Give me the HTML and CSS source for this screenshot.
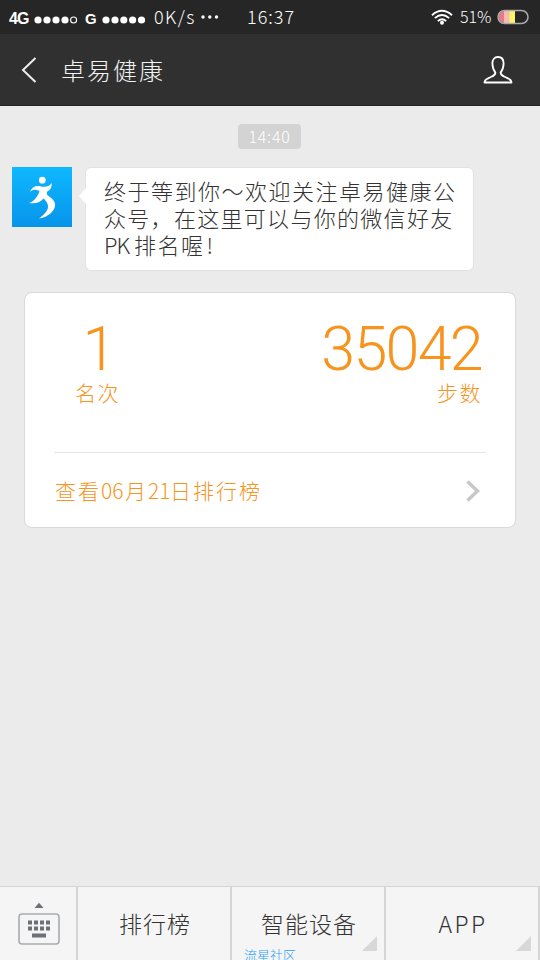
FILE: index.html
```html
<!DOCTYPE html>
<html lang="zh-CN">
<head>
<meta charset="utf-8">
<title>卓易健康</title>
<link rel="stylesheet" href="styles.css">
</head>
<body>
<div class="screen">
  <header class="status">
    <span class="net net-4g">4G</span>
    <svg class="dots" width="44" height="10" viewBox="0 0 44 10"><g fill="#fff"><circle cx="4" cy="5" r="3.6"/><circle cx="13" cy="5" r="3.6"/><circle cx="22" cy="5" r="3.6"/><circle cx="31" cy="5" r="3.6"/></g><circle cx="39.6" cy="5" r="3" fill="none" stroke="#fff" stroke-width="1.1"/></svg>
    <span class="net net-g">G</span>
    <svg class="dots" width="44" height="10" viewBox="0 0 44 10"><g fill="#fff"><circle cx="4" cy="5" r="3.6"/><circle cx="13" cy="5" r="3.6"/><circle cx="21.8" cy="5" r="3.6"/><circle cx="30.6" cy="5" r="3.6"/><circle cx="39.5" cy="5" r="3.6"/></g></svg>
    <span class="speed">0K/s</span>
    <svg class="more" width="18" height="4" viewBox="0 0 18 4"><g fill="#fff"><circle cx="2" cy="2" r="1.7"/><circle cx="8.800" cy="2" r="1.7"/><circle cx="15.500" cy="2" r="1.7"/></g></svg>
    <span class="clock">16:37</span>
    <svg class="wifi" width="22" height="17" viewBox="0 0 22 17"><g fill="none" stroke="#fff" stroke-width="1.8"><path d="M1 6.200Q11-2.600 21 6.200"/><path d="M3.800 9.200Q11 2.800 18.200 9.200"/><path d="M6.800 12.100Q11 8.300 15.200 12.100"/></g><circle cx="11" cy="13.800" r="2" fill="#fff"/></svg>
    <span class="percent">51%</span>
    <svg class="battery" width="32" height="16" viewBox="0 0 32 16"><path d="M8 2H7.500A6 6 0 0 0 7.500 14H8z" fill="#e77a85"/><path d="M7 2h6v12H7z" fill="#f5bdb0"/><path d="M12.500 2h5.500v12h-5.500z" fill="#fff36a"/><rect x="1" y="1.500" width="30" height="13" rx="6.500" fill="none" stroke="#aaa" stroke-width="1.500"/></svg>
  </header>
  <nav class="titlebar">
    <svg class="back" width="16" height="28" viewBox="0 0 16 28"><path d="M14.500 2L2 14l12.500 12" fill="none" stroke="#eee" stroke-width="2"/></svg>
    <h1 class="title">卓易健康</h1>
    <svg class="person" width="30" height="30" viewBox="0 0 30 30"><path d="M12.400 17.600C10.600 15.200 9.400 12.300 9.400 8.500C9.400 4.400 11.400 2 15 2s5.600 2.400 5.600 6.500c0 3.800-1.200 6.700-3 9.100c.1 3.200 2.300 3.200 6.800 5.500c2.800 1.400 4.100 1.700 4.100 4.400H1.500c0-2.700 1.300-3 4.100-4.400c4.500-2.300 6.700-2.300 6.800-5.500z" fill="none" stroke="#fff" stroke-width="1.800" stroke-linejoin="round"/></svg>
  </nav>
  <main class="chat">
    <time class="stamp">14:40</time>
    <div class="message">
      <svg class="avatar" width="60" height="60" viewBox="0 0 60 60"><defs><linearGradient id="sky" x1="0" y1="0" x2="0" y2="1"><stop offset="0" stop-color="#0eb8ff"/><stop offset="1" stop-color="#0794ea"/></linearGradient></defs><path d="M0 0h60v60H0z" fill="url(#sky)"/><g fill="#fff"><circle cx="30.300" cy="13.200" r="3.400"/><path d="M18 24.800C20 19.800 24 18 29 19.400C33 20.500 37.500 19.500 39.600 16C40 20.500 38.200 23 35 24.800C34.200 27 35 28 37.800 30C43 33.500 44.500 37.500 41.800 42.500C38.800 47.500 33 50.800 27 51.500C31.500 48 35.800 44 36 40C36.200 36 33.800 33.800 31.500 31.500C28.500 35.200 24 37.200 17.200 36C22 34.300 25.800 29.500 27.500 24.200C24.500 22.300 21 22 18 24.800z"/></g></svg>
      <div class="bubble">
        <p>终于等到你～欢迎关注卓易健康公</p>
        <p class="second">众号，在这里可以与你的微信好友</p>
        <p><span class="pk">PK</span>排名喔<span class="bang">!</span></p>
      </div>
    </div>
    <section class="card">
      <div class="stats">
        <div class="stat rank"><strong>1</strong><span>名次</span></div>
        <div class="stat steps"><strong>35042</strong><span>步数</span></div>
      </div>
      <div class="link">
        <span class="link-text">查看<i class="n06">06</i>月<i class="n21">21</i>日排行榜</span>
        <svg width="14" height="22" viewBox="0 0 14 22"><path d="M1.500 1.500L11.500 11l-10 9.500" fill="none" stroke="#c8c8c8" stroke-width="3.600"/></svg>
      </div>
    </section>
  </main>
  <footer class="menu">
    <div class="keys"><svg width="42" height="43" viewBox="0 0 42 43"><path d="M21 .8l4.500 5.200h-9z" fill="#6d7076"/><rect x="1" y="12" width="40" height="30" rx="3" fill="none" stroke="#a9abb0" stroke-width="1.600"/><g fill="#6d7076"><path d="M10 18.500h4v4h-4zm6 0h4v4h-4zm6 0h4v4h-4zm6 0h4v4h-4zM10 24.500h4v4h-4zm6 0h4v4h-4zm6 0h4v4h-4zm6 0h4v4h-4zM14 31.500h14v4H14z"/></g></svg></div>
    <div class="item"><span>排行榜</span></div>
    <div class="item"><span>智能设备</span><b class="corner"></b><small class="watermark">流星社区</small></div>
    <div class="item"><span class="app">APP</span><b class="corner"></b></div>
  </footer>
</div>
</body>
</html>
```
FILE: styles.css
```css
* { box-sizing: border-box; }
body { margin: 0; font-family: "Noto Sans CJK SC", sans-serif; font-weight: 300; }
h1, p { margin: 0; font-weight: 300; }
svg { display: block; flex: none; }
i { font-style: normal; }
.screen { width: 540px; height: 960px; display: flex; flex-direction: column; background: #ebebeb; overflow: hidden; }

.status { height: 34px; background: #262626; color: #fff; display: flex; align-items: center; white-space: nowrap; line-height: 20px; font-size: 18px; }
.status > * { flex: none; }
.net { font: 700 16px/20px "Liberation Sans", sans-serif; padding-top: 4px; }
.net-4g { width: 25px; margin-left: 9px; letter-spacing: -1px; }
.net-g { width: 17px; margin-left: 7px; font-size: 15px; }
.dots { margin-top: 5px; }
.speed { width: 43px; margin-left: 8px; letter-spacing: 1.4px; padding-bottom: 2px; }
.more { margin-left: 4px; }
.clock { width: 49px; margin-left: 28px; letter-spacing: 1px; padding-bottom: 2px; }
.wifi { margin-left: 135px; }
.percent { width: 32px; margin-left: 7px; font-size: 16px; letter-spacing: -.1px; padding-bottom: 2px; }
.battery { margin-left: 5px; }

.titlebar { height: 72px; background: #303030; border-bottom: 1px solid #252525; display: flex; align-items: center; color: #f2f2f2; padding: 0 27px 0 21px; }
.title { margin-left: 24px; font-size: 24px; line-height: 36px; letter-spacing: 2px; flex: 1; }

.chat { flex: 1; display: flex; flex-direction: column; }
.stamp { align-self: flex-start; width: 63px; height: 25px; margin: 18px 0 0 238px; border-radius: 4px; background: #d3d3d3; color: #fff; font-size: 16px; line-height: 24px; letter-spacing: .8px; text-align: center; }
.message { display: flex; margin: 18px 0 0 12px; }
.bubble { position: relative; width: 389px; height: 104px; margin-left: 13px; padding: 9px 0 0 18px; background: #fff; border: 1px solid #e1e1e1; border-radius: 6px; color: #333; font-size: 22px; line-height: 27px; letter-spacing: 1.5px; white-space: nowrap; }
.bubble::before { content: ""; position: absolute; left: -7px; top: 20px; border: 8px solid transparent; border-left: 0; border-right: 7px solid #fff; }
.second { letter-spacing: 1.3px; }
.pk { display: inline-block; width: 30px; letter-spacing: -1px; }
.bang { margin-left: 2px; }

.card { width: 492px; height: 236px; margin: 21px 0 0 24px; padding: 0 29px; background: #fff; border: 1px solid #d9d9d9; border-radius: 8px; color: #f7941d; }
.stats { height: 160px; border-bottom: 1px solid #e6e6e6; display: flex; justify-content: space-between; padding: 26px 5px 0 21px; }
.stat { display: flex; flex-direction: column; }
.stat strong { font: 300 61px/60px Roboto, "Noto Sans", sans-serif; }
.stat span { font-size: 21px; line-height: 26px; letter-spacing: 1.5px; margin-right: -1px; }
.rank { align-items: center; }
.rank strong { padding-left: 5px; }
.steps { align-items: flex-end; }
.steps strong { letter-spacing: -1.7px; margin-right: -1px; }
.link { height: 76px; display: flex; align-items: center; justify-content: space-between; padding: 0 6px 0 1px; }
.link-text { font-size: 21px; line-height: 30px; letter-spacing: 2px; white-space: nowrap; padding-bottom: 3px; }
.n06, .n21 { display: inline-block; letter-spacing: 0; }
.n06 { width: 24px; }
.n21 { width: 22px; }

.menu { height: 74px; display: flex; background: #f5f5f5; border-top: 1px solid #d5d5d5; color: #333; }
.keys { width: 76px; padding: 15px 0 0 18px; }
.item { position: relative; width: 154px; border-left: 2px solid #d5d5d5; display: flex; justify-content: center; padding: 19px 0 0 2px; font-size: 23px; line-height: 34px; letter-spacing: 1px; }
.item:last-child { width: 156px; border-right: 2px solid #d5d5d5; }
.app { letter-spacing: 2.5px; }
.corner { position: absolute; right: 7px; bottom: 9px; border-left: 15px solid transparent; border-bottom: 15px solid #d8d8d8; }
.watermark { position: absolute; left: 12px; bottom: -4px; font-size: 13px; line-height: 19px; letter-spacing: 0; color: #2ba2f5; }
```
